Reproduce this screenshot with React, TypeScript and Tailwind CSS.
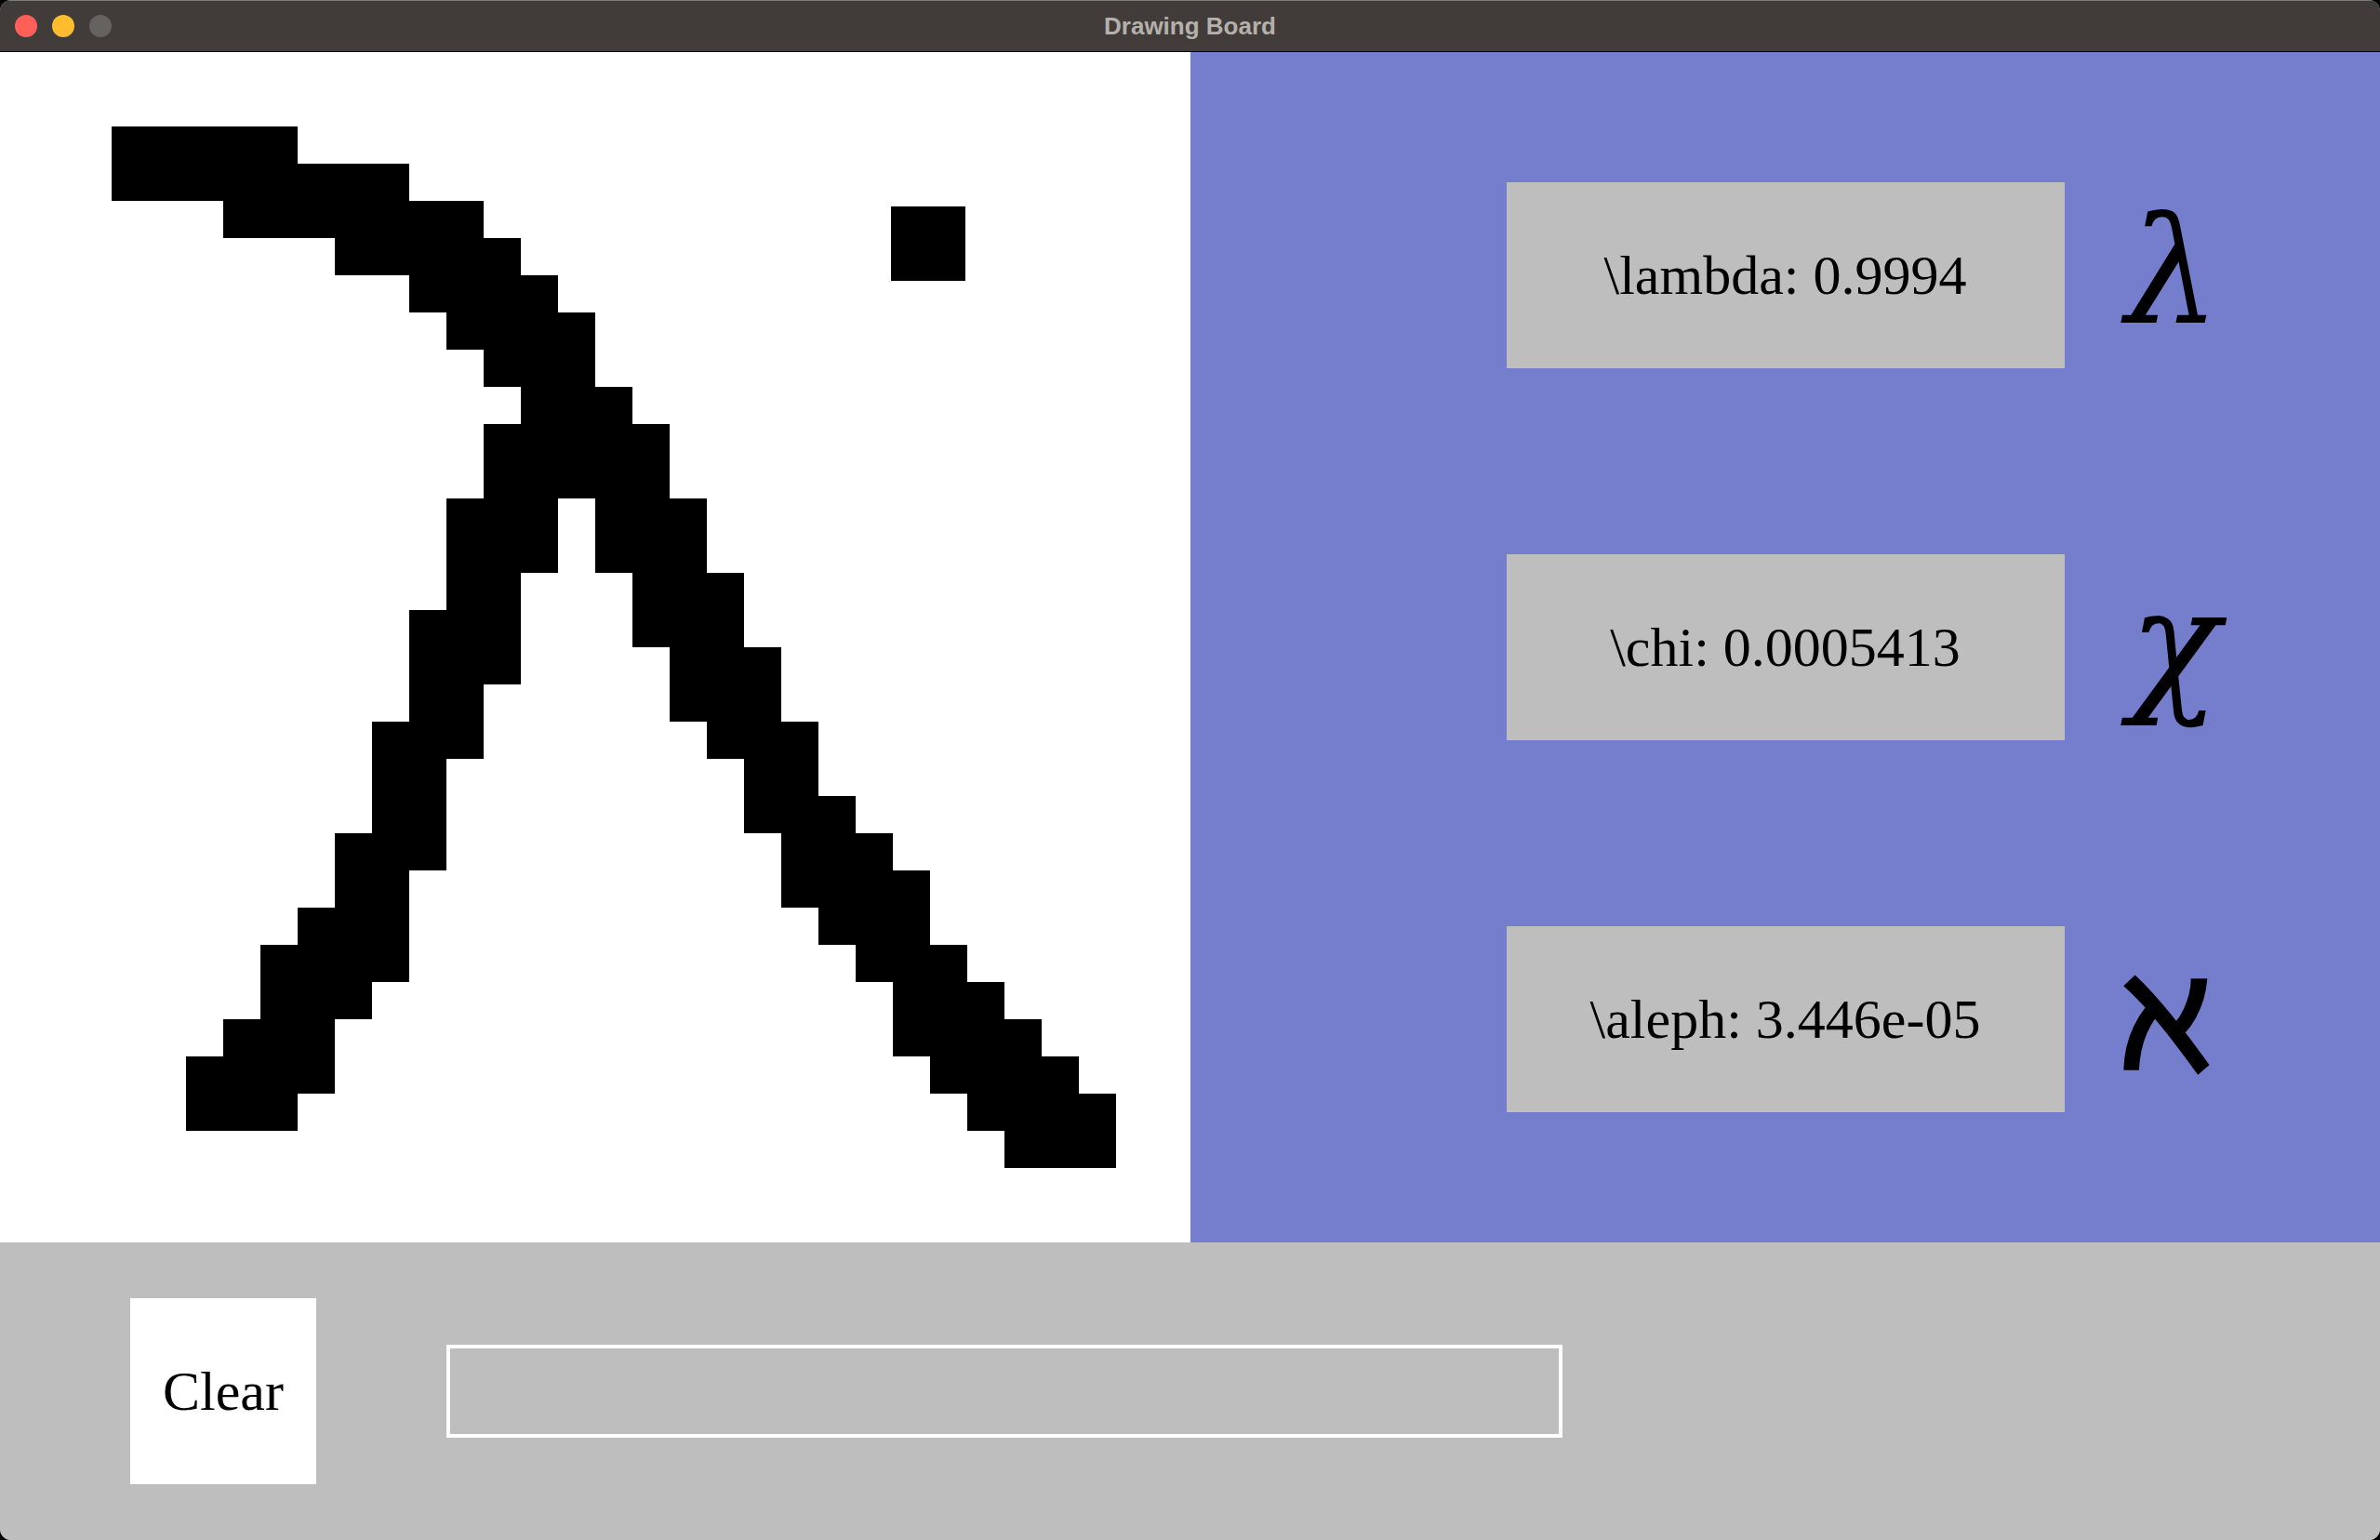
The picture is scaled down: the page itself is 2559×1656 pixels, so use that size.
import React from "react";

// black cells of the drawing, one row of the 32x32 grid per entry: [row, fromCol, toCol]
const strokes: [number, number, number][] = [
  [2, 3, 7],
  [3, 3, 10],
  [4, 6, 12],
  [5, 9, 13],
  [6, 11, 14],
  [7, 12, 15],
  [8, 13, 15],
  [9, 14, 16],
  [10, 13, 17],
  [11, 13, 17],
  [12, 12, 14], [12, 16, 18],
  [13, 12, 14], [13, 16, 18],
  [14, 12, 13], [14, 17, 19],
  [15, 11, 13], [15, 17, 19],
  [16, 11, 13], [16, 18, 20],
  [17, 11, 12], [17, 18, 20],
  [18, 10, 12], [18, 19, 21],
  [19, 10, 11], [19, 20, 21],
  [20, 10, 11], [20, 20, 22],
  [21, 9, 11], [21, 21, 23],
  [22, 9, 10], [22, 21, 24],
  [23, 8, 10], [23, 22, 24],
  [24, 7, 10], [24, 23, 25],
  [25, 7, 9], [25, 24, 26],
  [26, 6, 8], [26, 24, 27],
  [27, 5, 8], [27, 25, 28],
  [28, 5, 7], [28, 26, 29],
  [29, 27, 29],
];

const CELL = 40;

const predictions = [
  { label: "\\lambda: 0.9994", symbol: "λ", cls: "italic pl-[66px]" },
  { label: "\\chi: 0.0005413", symbol: "χ", cls: "italic pl-[70px]" },
  { label: "\\aleph: 3.446e-05", symbol: "ℵ", cls: "font-bold pl-[60px]" },
];

function Canvas() {
  return (
    <svg width={1280} height={1280} viewBox="0 0 1280 1280" className="block shrink-0 bg-white">
      {strokes.map(([r, a, b], i) => (
        <rect key={i} x={a * CELL} y={r * CELL} width={(b - a + 1) * CELL} height={CELL} fill="#000" />
      ))}
      <rect x={958} y={166} width={80} height={80} fill="#000" />
    </svg>
  );
}

export default function App() {
  return (
    <div className="w-[2559px] h-[1656px] bg-black">
      <div className="w-full h-full rounded-[12px] overflow-hidden flex flex-col bg-[#bebebe]">
        {/* title bar */}
        <div className="h-[56px] shrink-0 grid grid-cols-[1fr_auto_1fr] items-center bg-[#413c39] border-t border-t-[#7d7a77] border-b border-b-black">
          <div className="flex items-center gap-[16px] pl-[16px]">
            <span className="w-[24px] h-[24px] rounded-full bg-[#fe5f57]" />
            <span className="w-[24px] h-[24px] rounded-full bg-[#febc2e]" />
            <span className="w-[24px] h-[24px] rounded-full bg-[#65625f]" />
          </div>
          <div className="text-[26px] font-bold text-[#b4b0ab] font-['Liberation_Sans',sans-serif]">Drawing Board</div>
          <div />
        </div>

        {/* canvas + predictions */}
        <div className="flex h-[1280px] shrink-0">
          <Canvas />
          <div className="flex-1 bg-[#757ecc] flex flex-col justify-center gap-[200px]">
            {predictions.map((p) => (
              <div key={p.label} className="grid grid-cols-[1fr_600px_1fr] items-center">
                <div />
                <div className="h-[200px] bg-[#bebebe] flex items-center justify-center text-[60px] text-black font-['Liberation_Serif',serif]">
                  {p.label}
                </div>
                <div className={`pb-[8px] flex items-center ${p.cls}`}>
                  <span className="text-[160px] leading-none text-black font-['DejaVu_Serif',serif]">
                    {p.symbol}
                  </span>
                </div>
              </div>
            ))}
          </div>
        </div>

        {/* bottom controls */}
        <div className="flex-1 flex items-center pl-[140px] gap-[140px] bg-[#bebebe]">
          <button className="w-[200px] h-[200px] bg-white text-[60px] text-black font-['Liberation_Serif',serif]">
            Clear
          </button>
          <input className="w-[1200px] h-[100px] border-4 border-white bg-transparent outline-none px-3 text-[48px] font-['Liberation_Serif',serif]" />
        </div>
      </div>
    </div>
  );
}
